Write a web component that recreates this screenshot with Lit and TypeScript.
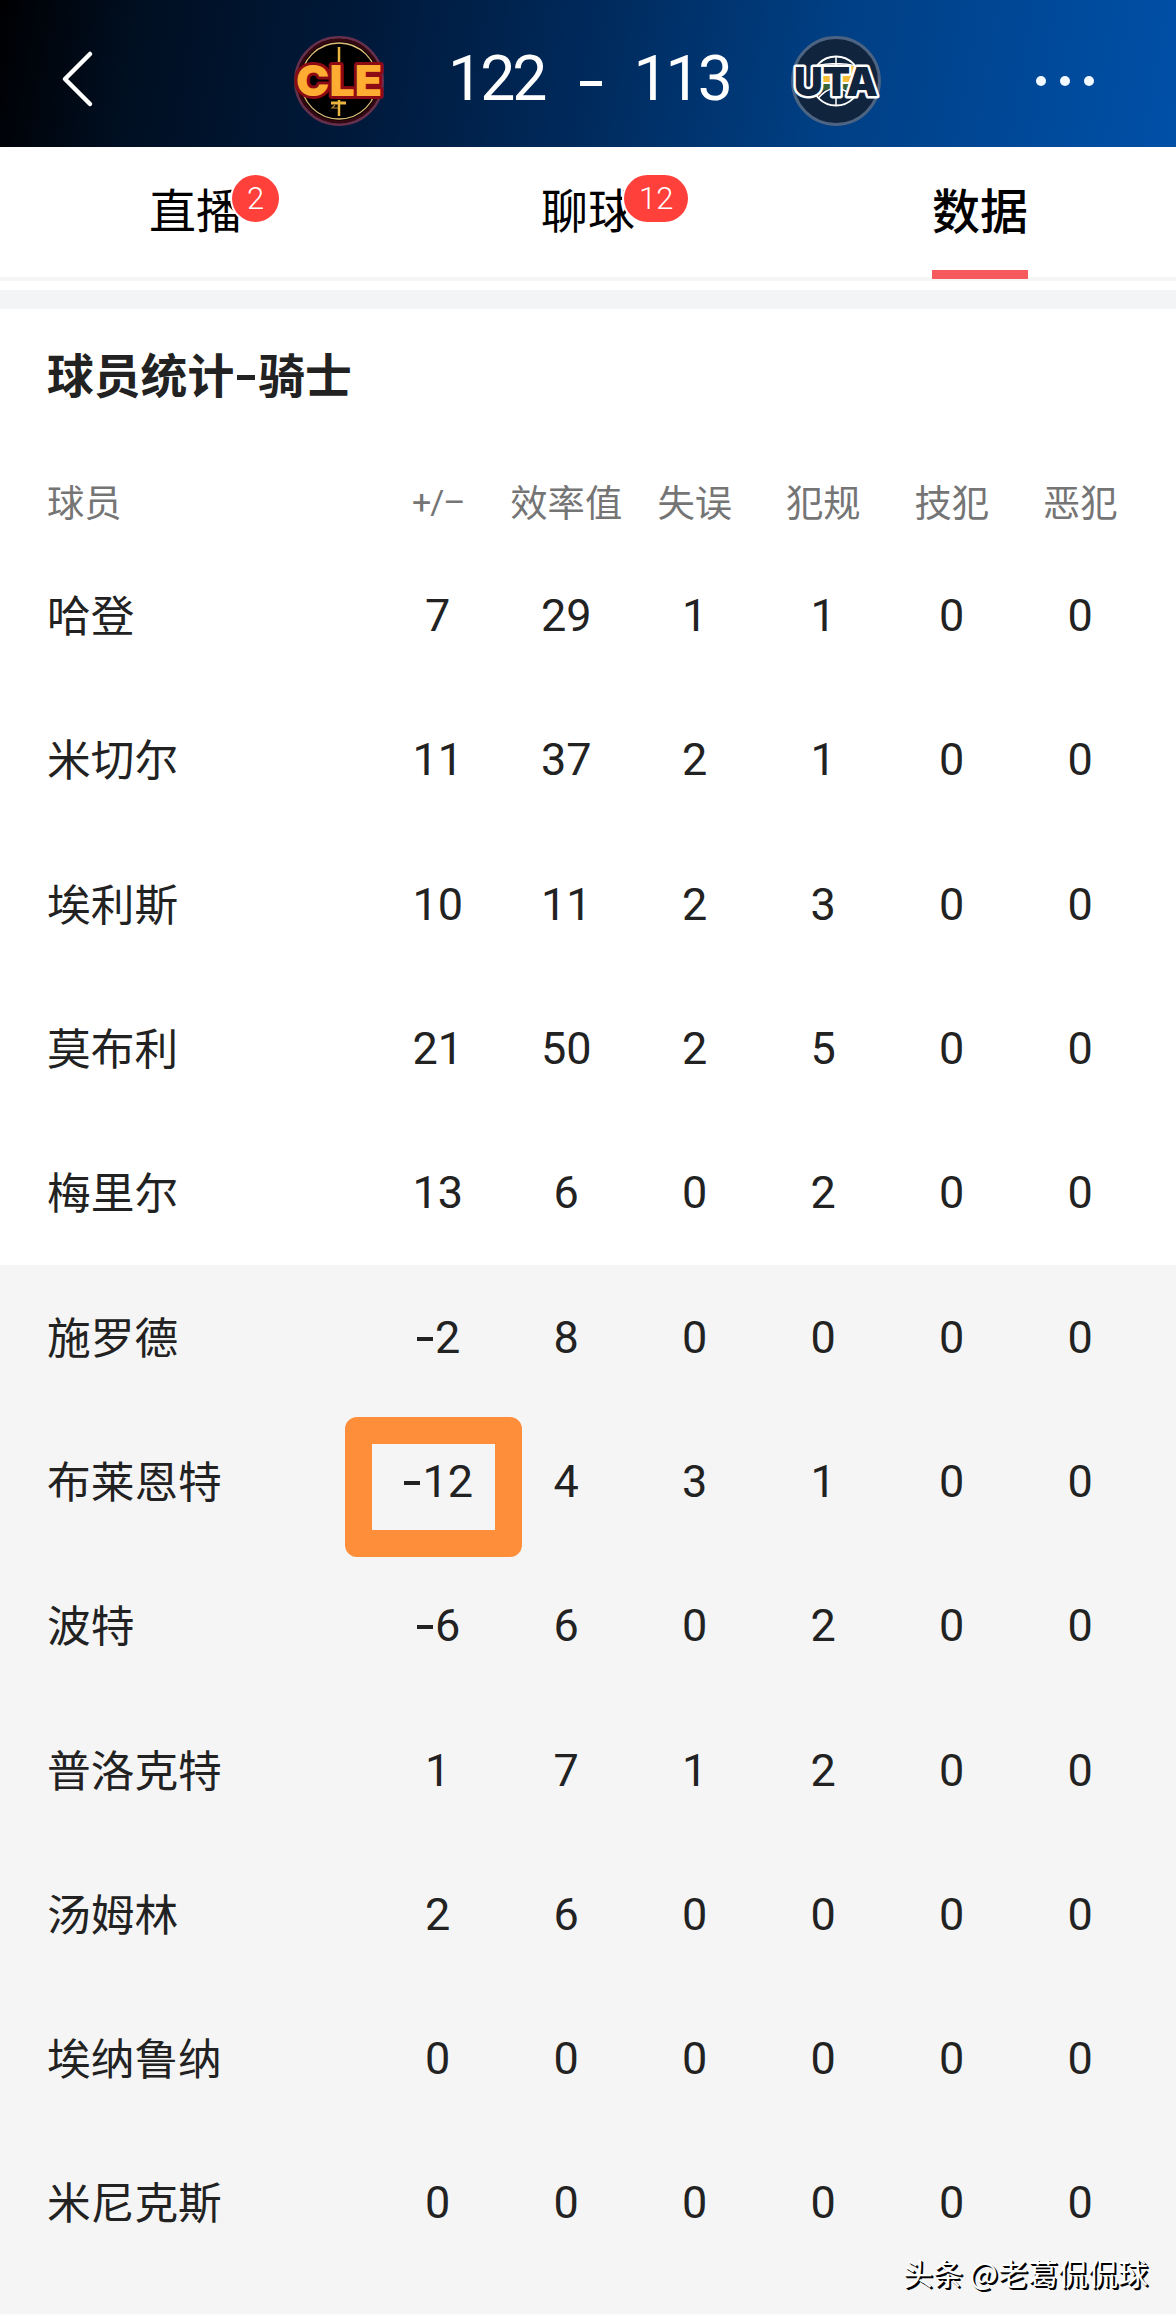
import { LitElement, html, css, svg } from "lit";
import { customElement } from "lit/decorators.js";
import { classMap } from "lit/directives/class-map.js";

const COLUMNS = ["+/–", "效率值", "失误", "犯规", "技犯", "恶犯"];

interface Player {
  name: string;
  stats: number[];
  bench?: boolean;
  marked?: number;
}

const PLAYERS: Player[] = [
  { name: "哈登", stats: [7, 29, 1, 1, 0, 0] },
  { name: "米切尔", stats: [11, 37, 2, 1, 0, 0] },
  { name: "埃利斯", stats: [10, 11, 2, 3, 0, 0] },
  { name: "莫布利", stats: [21, 50, 2, 5, 0, 0] },
  { name: "梅里尔", stats: [13, 6, 0, 2, 0, 0] },
  { name: "施罗德", stats: [-2, 8, 0, 0, 0, 0], bench: true },
  { name: "布莱恩特", stats: [-12, 4, 3, 1, 0, 0], bench: true, marked: 0 },
  { name: "波特", stats: [-6, 6, 0, 2, 0, 0], bench: true },
  { name: "普洛克特", stats: [1, 7, 1, 2, 0, 0], bench: true },
  { name: "汤姆林", stats: [2, 6, 0, 0, 0, 0], bench: true },
  { name: "埃纳鲁纳", stats: [0, 0, 0, 0, 0, 0], bench: true },
  { name: "米尼克斯", stats: [0, 0, 0, 0, 0, 0], bench: true },
];

@customElement("score-header")
export class ScoreHeader extends LitElement {
  static styles = css`
    :host {
      display: block;
      height: 147px;
      background: linear-gradient(100deg, #000002 0%, #000f22 12%, #001a3c 32%, #002a5c 50%, #003f84 70%, #0050a8 100%);
    }
    .bar {
      display: grid;
      grid-template-columns: 294px 90px 1fr 90px 295px;
      align-items: center;
      height: 147px;
    }
    svg { display: block; overflow: visible; }
    .back { margin: 10px 0 0 61px; }
    .logo { margin-top: 15px; }
    .score {
      display: flex;
      align-items: center;
      padding-left: 64px;
      margin-top: 10px;
      color: #fff;
      font: 400 62.500px/74px Roboto, "Noto Sans", sans-serif;
      letter-spacing: -3px;
      white-space: nowrap;
    }
    .dash { width: 22px; height: 5px; margin: 9px 31px 0 36px; background: #fff; }
    .more { display: flex; gap: 14px; justify-content: center; margin: 14px 0 0 70px; width: 228px; justify-self: start; }
    .dot { width: 10px; height: 10px; border-radius: 50%; background: #f3faff; }
  `;

  private cle() {
    return svg`
      <circle cx="45" cy="45" r="43.6" fill="#0a0204" stroke="#65304c" stroke-width="2.8"/>
      <circle cx="45" cy="45" r="41" fill="#000" stroke="#330810" stroke-width="3"/>
      <circle cx="45" cy="45" r="38" fill="none" stroke="#dfbd78" stroke-width="1.3"/>
      <path d="M45 11V30M45 64V80" stroke="#e9b43f" stroke-width="2.5"/>
      <path d="M37 67h15" stroke="#e9b43f" stroke-width="3"/>
      <path d="M41 69l-3 3h6" stroke="#b98a35" stroke-width="1.200" fill="none"/>
      <text x="45" y="60" text-anchor="middle" textLength="86" lengthAdjust="spacingAndGlyphs"
        font-family="Inter, sans-serif" font-weight="900" font-size="43" fill="#ffad32" stroke="#8c0a14"
        stroke-width="6" stroke-linejoin="round" paint-order="stroke">CLE</text>`;
  }

  private uta() {
    return svg`
      <circle cx="45" cy="45" r="43.400" fill="#11243e" stroke="#4c6482" stroke-width="3"/>
      <clipPath id="ball"><circle cx="45" cy="45" r="24"/></clipPath>
      <g clip-path="url(#ball)">
        <path d="M20 32h50v14H20z" fill="#11243e"/>
        <path d="M20 37h25l8-7h17v16H20z" fill="#f5bd35"/>
        <path d="M20 48h50v8H20z" fill="#3c6536"/>
        <path d="M20 47h50" stroke="#fff" stroke-width="2"/>
        <path d="M20 80V62q25-20 50 0V80z" fill="#11243e"/>
        <path d="M45 20v50M24 30q21-5 42 0M24 66q21-28 42 0" stroke="#fff" stroke-width="1.500" fill="none"/>
      </g>
      <circle cx="45" cy="45" r="24.500" fill="none" stroke="#fff" stroke-width="1.800"/>
      <text x="45" y="59.500" text-anchor="middle" textLength="84" lengthAdjust="spacingAndGlyphs"
        font-family="Inter, sans-serif" font-weight="900" font-size="40" fill="#11243e" stroke="#fff"
        stroke-width="5" stroke-linejoin="round" paint-order="stroke">UTA</text>`;
  }

  render() {
    return html`
      <div class="bar">
        <svg class="back" width="32" height="58" viewBox="0 0 32 58" fill="none" stroke="#fff" stroke-width="4.500" stroke-linecap="round" stroke-linejoin="round">
          <path d="M29 4L4 29L29 54" />
        </svg>
        <svg class="logo" width="90" height="90" viewBox="0 0 90 90">${this.cle()}</svg>
        <div class="score"><span>122</span><span class="dash"></span><span>113</span></div>
        <svg class="logo" width="90" height="90" viewBox="0 0 90 90">${this.uta()}</svg>
        <div class="more"><span class="dot"></span><span class="dot"></span><span class="dot"></span></div>
      </div>
    `;
  }
}

@customElement("match-tabs")
export class MatchTabs extends LitElement {
  static styles = css`
    :host { display: block; }
    .tabs {
      display: grid;
      grid-template-columns: repeat(3, 1fr);
      height: 130px;
      border-bottom: 4px solid #f5f5f6;
      background: #fff;
    }
    .tab {
      display: flex;
      justify-content: center;
      color: #000;
      font: 400 47px/68px "Noto Sans CJK SC", sans-serif;
      padding-top: 27px;
    }
    .active { font-weight: 500; font-size: 48px; }
    .label { position: relative; height: 103px; }
    .active .label { height: 96px; border-bottom: 9px solid #f65a5c; }
    .badge {
      position: absolute;
      left: 83px;
      top: 1px;
      min-width: 47px;
      height: 47px;
      box-sizing: border-box;
      padding: 0 15px;
      border-radius: 24px;
      background: #ff403b;
      box-shadow: 0 0 0 2px #fff;
      color: #fff;
      text-align: center;
      font: 300 31px/47px Roboto, sans-serif;
    }
    .band { height: 19px; margin-top: 9px; background: #f3f4f6; }
  `;

  render() {
    return html`
      <div class="tabs">
        <div class="tab"><span class="label">直播<span class="badge">2</span></span></div>
        <div class="tab"><span class="label">聊球<span class="badge">12</span></span></div>
        <div class="tab active"><span class="label">数据</span></div>
      </div>
      <div class="band"></div>
    `;
  }
}

@customElement("player-table")
export class PlayerTable extends LitElement {
  static styles = css`
    :host {
      display: flex;
      flex-direction: column;
      flex: 1;
      color: #222;
      font-family: "Noto Sans CJK SC", sans-serif;
    }
    .title { margin: 0; padding: 29px 47px 0; font-size: 46.800px; line-height: 70px; font-weight: 700; }
    .title-dash { display: inline-block; width: 18px; height: 5px; margin: 0 3px 13px 3px; background: #222; }
    .row {
      display: grid;
      grid-template-columns: 326.500px repeat(6, 128.500px);
      align-items: center;
      height: 144.300px;
      padding-left: 47px;
      white-space: nowrap;
      font-size: 43.700px;
      line-height: 64px;
    }
    .head { height: 87px; padding-top: 49px; color: #757575; font-size: 37.300px; line-height: 54px; }
    .bench { background: #f5f5f5; }
    .name { padding-bottom: 6px; }
    .cell { position: relative; text-align: center; }
    .value { font-family: Roboto, sans-serif; font-size: 45px; line-height: 64px; }
    .sign { font-family: Roboto, sans-serif; font-size: 34px; letter-spacing: -1px; padding: 3px 0 0 1px; }
    .mark {
      position: absolute;
      left: -29px;
      top: -33px;
      width: 177px;
      height: 140px;
      box-sizing: border-box;
      border: 27px solid #ff8e3b;
      border-radius: 12px;
    }
    .minus { display: inline-block; width: 16px; height: 4px; margin: 0 2px 12px 2px; background: #222; }
    .foot { flex: 1; display: flex; justify-content: flex-end; background: #f5f5f5; border-bottom: 2px solid #fdfdfd; }
    .credit {
      position: relative;
      margin: -26px 28px 0 0;
      height: 44px;
      color: #fff;
      font-size: 30px;
      line-height: 44px;
      text-shadow: 1px 1px 0 #000, 2px 2px 0 #000;
      white-space: nowrap;
    }
  `;

  private value(n: number) {
    return n < 0 ? html`<span class="minus"></span>${-n}` : html`${n}`;
  }

  render() {
    return html`
      <h2 class="title">球员统计<span class="title-dash"></span>骑士</h2>
      <div class="row head">
        <span>球员</span>
        ${COLUMNS.map((c, i) => html`<span class=${classMap({ cell: true, sign: i === 0 })}>${c}</span>`)}
      </div>
      ${PLAYERS.map(
        (p) => html`
          <div class=${classMap({ row: true, bench: !!p.bench })}>
            <span class="name">${p.name}</span>
            ${p.stats.map(
              (n, i) => html`<span class="cell value">${p.marked === i ? html`<span class="mark"></span>` : ""}${this.value(n)}</span>`
            )}
          </div>
        `
      )}
      <div class="foot"><span class="credit">头条 @老葛侃侃球</span></div>
    `;
  }
}

@customElement("app-root")
export class AppRoot extends LitElement {
  static styles = css`
    :host {
      display: flex;
      flex-direction: column;
      width: 1176px;
      height: 2316px;
      overflow: hidden;
      background: #fff;
    }
  `;

  render() {
    return html`<score-header></score-header><match-tabs></match-tabs><player-table></player-table>`;
  }
}
